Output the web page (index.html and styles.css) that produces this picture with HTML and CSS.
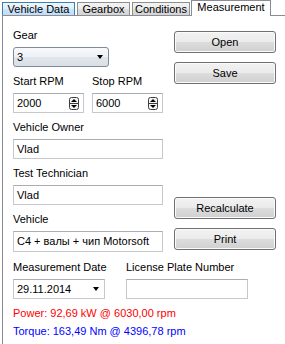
FILE: index.html
```html
<!DOCTYPE html>
<html lang="en">
<head>
  <meta charset="UTF-8" />
  <title>Measurement</title>
  <link rel="stylesheet" href="styles.css">
</head>
<body>
  <div class="tabs">
    <div class="tab hover tab-vehicle">Vehicle Data</div>
    <div class="tab tab-gearbox">Gearbox</div>
    <div class="tab tab-conditions">Conditions</div>
    <div class="tab active tab-measurement">Measurement</div>
  </div>

  <div class="panel">
    <div class="top">
      <div class="fields">
        <div class="field">
          <label>Gear</label>
          <div class="combo">
            <span>3</span>
            <span class="arrow"></span>
          </div>
        </div>

        <div class="field rpm-row">
          <div>
            <label>Start RPM</label>
            <div class="spin">
              <span>2000</span>
              <svg class="spin-btn" width="10" height="13" viewBox="0 0 10 13">
                <rect x="0.5" y="0.5" width="9" height="12" rx="2" fill="#f4f4f4" stroke="#3c3c3c"/>
                <line x1="1" y1="6.5" x2="9" y2="6.5" stroke="#3c3c3c"/>
                <path d="M2 5 L5 2 L8 5 Z" fill="#000"/>
                <path d="M2 8 L8 8 L5 11 Z" fill="#000"/>
              </svg>
            </div>
          </div>
          <div>
            <label>Stop RPM</label>
            <div class="spin">
              <span>6000</span>
              <svg class="spin-btn" width="10" height="13" viewBox="0 0 10 13">
                <rect x="0.5" y="0.5" width="9" height="12" rx="2" fill="#f4f4f4" stroke="#3c3c3c"/>
                <line x1="1" y1="6.5" x2="9" y2="6.5" stroke="#3c3c3c"/>
                <path d="M2 5 L5 2 L8 5 Z" fill="#000"/>
                <path d="M2 8 L8 8 L5 11 Z" fill="#000"/>
              </svg>
            </div>
          </div>
        </div>

        <div class="field">
          <label>Vehicle Owner</label>
          <div class="textbox">Vlad</div>
        </div>

        <div class="field">
          <label>Test Technician</label>
          <div class="textbox">Vlad</div>
        </div>

        <div class="field">
          <label>Vehicle</label>
          <div class="textbox">C4 + валы + чип Motorsoft</div>
        </div>
      </div>

      <div class="actions">
        <button>Open</button>
        <button>Save</button>
        <button class="gap-top">Recalculate</button>
        <button>Print</button>
      </div>
    </div>

    <div class="date-row">
      <label>Measurement Date</label>
      <label>License Plate Number</label>
      <div class="datebox">
        <span>29.11.2014</span>
        <span class="arrow"></span>
      </div>
      <div class="textbox"></div>
    </div>

    <div class="result power">Power: 92,69 kW @ 6030,00 rpm</div>
    <div class="result torque">Torque: 163,49 Nm @ 4396,78 rpm</div>
  </div>
</body>
</html>
```

FILE: styles.css
```css
* {
  box-sizing: border-box;
}

html, body {
  overflow: hidden;
}

body {
  margin: 0;
  background: #fff;
  color: #000;
  font-family: "Liberation Sans", Arial, sans-serif;
  font-size: 11px;
  line-height: 13px;
}

/* tab strip */
.tabs {
  display: flex;
  align-items: flex-end;
  height: 16px;
  margin-left: 2px;
  border-bottom: 1px solid #898c95;
}

.tab {
  height: 13px;
  margin-right: 1px;
  border: 1px solid #8e8f8f;
  border-bottom: none;
  background: linear-gradient(#f3f3f3, #ebebeb 50%, #dedede 50%, #d4d4d4);
  text-align: center;
  line-height: 12px;
}

.tab.hover {
  border-color: #3c7fb1;
  background: linear-gradient(#eef6fd, #deeefb 50%, #cde4f8 50%, #c2ddf5);
}

.tab.active {
  height: 16px;
  margin-bottom: -1px;
  border-color: #898c95;
  background: #fff;
  line-height: 13px;
}

.tab-vehicle { width: 73px; }
.tab-gearbox { width: 53px; margin-left: 1px; }
.tab-conditions { width: 58px; margin-left: 1px; }
.tab-measurement { width: 80px; }

/* panel */
.panel {
  border-left: 1px solid #898c95;
  margin-left: 2px;
  height: 340px;
  padding-left: 10px;
}

.top {
  display: flex;
}

.fields {
  width: 150px;
  padding-top: 13px;
}

.field {
  margin-bottom: 8px;
}

.field label,
.date-row label {
  display: block;
  height: 13px;
  margin-bottom: 5px;
}

.rpm-row {
  display: grid;
  grid-template-columns: 71px 71px;
  column-gap: 8px;
}

.rpm-row label {
  white-space: nowrap;
}

.combo,
.datebox,
.spin,
.textbox {
  display: flex;
  align-items: center;
  height: 20px;
  padding-left: 3px;
}

.combo {
  width: 96px;
  border: 1px solid #7f8a99;
  border-radius: 3px;
  background: linear-gradient(#f7f9fb, #eef1f5 50%, #e1e6ec 50%, #d9dfe6);
  justify-content: space-between;
  padding-right: 5px;
}

.arrow {
  width: 0;
  height: 0;
  border-left: 3.5px solid transparent;
  border-right: 3.5px solid transparent;
  border-top: 4px solid #000;
}

.spin,
.textbox,
.datebox {
  border: 1px solid #c5c8cf;
  border-top-color: #abadb3;
  background: #fff;
}

.spin {
  justify-content: space-between;
  padding-right: 4px;
}

.spin-btn {
  display: block;
}

.textbox {
  white-space: nowrap;
}

.field:last-child .textbox {
  height: 21px;
}

/* buttons */
.actions {
  display: flex;
  flex-direction: column;
  padding-top: 15px;
  margin-left: 11px;
}

button {
  width: 102px;
  height: 22px;
  margin-bottom: 9px;
  border: 1px solid #707070;
  border-radius: 3px;
  background: linear-gradient(#f2f2f2, #ebebeb 50%, #dddddd 50%, #d0d0d0);
  box-shadow: inset 0 0 0 1px #fbfbfb;
  font-family: "Liberation Sans", Arial, sans-serif;
  font-size: 11px;
  color: #000;
  padding: 0;
}

button.gap-top {
  margin-top: 104px;
}

/* bottom rows */
.date-row {
  display: grid;
  grid-template-columns: 92px 122px;
  column-gap: 21px;
  margin-top: 1px;
  margin-bottom: 8px;
}

.date-row label {
  white-space: nowrap;
}

.datebox {
  justify-content: space-between;
  padding-right: 5px;
}

.result {
  height: 13px;
  margin-bottom: 5px;
}

.power {
  color: #f00;
}

.torque {
  color: #00f;
}
```
